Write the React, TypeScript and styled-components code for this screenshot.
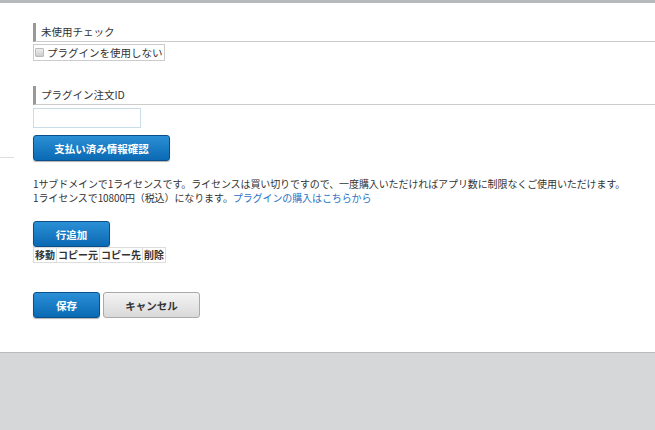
import React from "react";
import styled, { createGlobalStyle } from "styled-components";

const G = createGlobalStyle`
  html,body{margin:0;padding:0;background:#d6d7d9;}
  body{font-family:"Noto Sans CJK JP","Liberation Sans",sans-serif;font-size:11px;color:#333;line-height:1.2;}
`;
const Page = styled.div`
  background:#fff;height:353px;border-top:3px solid #b8b9bb;box-sizing:border-box;
  border-bottom:1px solid #bbb;position:relative;padding:20px 0 0 33px;
`;
const SideLine = styled.div`position:absolute;left:0;top:154px;width:14px;border-top:1px solid #ddd;`;
const Heading = styled.div`
  border-left:3px solid #999;border-bottom:1px solid #ccc;padding:0 0 0 5px;
  height:18px;line-height:17px;font-size:10.5px;color:#333;
`;
const CheckLabel = styled.label`
  display:inline-flex;align-items:center;gap:3px;border:1px solid #ccc;height:15px;line-height:15px;
  padding:0 1px 0 1px;font-size:10.5px;margin-top:2px;vertical-align:top;
`;
const Box = styled.span`width:7px;height:7px;border:1px solid #bbb;background:linear-gradient(#eee,#ccc);border-radius:1px;`;
const Input = styled.input`
  display:block;width:108px;height:20px;box-sizing:border-box;border:1px solid #c8dde8;
  margin-top:3px;outline:none;
`;
const Btn = styled.button<{ $w: number; $gray?: boolean }>`
  display:inline-flex;align-items:center;justify-content:center;width:${p => p.$w}px;height:26px;
  border-radius:3px;font:bold 10.5px "Noto Sans CJK JP",sans-serif;cursor:pointer;padding:0;
  ${p => p.$gray
    ? "background:linear-gradient(#f4f4f4,#d9d9d9);border:1px solid #aaa;color:#333;"
    : "background:linear-gradient(#2b8fd6,#0a6ab3);border:1px solid #0a4f8a;color:#fff;box-shadow:0 1px 1px rgba(0,0,0,.3);"}
`;
const Text = styled.p`margin:16px 0 0;line-height:14px;font-size:10px;letter-spacing:-0.1px;white-space:nowrap;`;
const Link = styled.a`color:#2a73c4;text-decoration:none;`;
const Cells = styled.div`display:flex;`;
const Cell = styled.span`border:1px solid #ddd;height:14px;line-height:14px;font-size:10px;font-weight:bold;padding:0 1px;margin-right:-1px;`;
const Row = styled.div`display:flex;gap:3px;`;
const Gap = styled.div<{ $h: number }>`height:${p => p.$h}px;`;

export default function App() {
  return (
    <>
      <G />
      <Page>
        <SideLine />
        <Heading>未使用チェック</Heading>
        <CheckLabel><Box />プラグインを使用しない</CheckLabel>
        <Gap $h={25} />
        <Heading>プラグイン注文ID</Heading>
        <Input />
        <Gap $h={7} />
        <Btn $w={137}>支払い済み情報確認</Btn>
        <Text>1サブドメインで1ライセンスです。ライセンスは買い切りですので、一度購入いただければアプリ数に制限なくご使用いただけます。<br />1ライセンスで10800円（税込）になります。<Link href="#">プラグインの購入はこちらから</Link></Text>
        <Gap $h={16} />
        <Btn $w={77}>行追加</Btn>
        <Cells><Cell>移動</Cell><Cell>コピー元</Cell><Cell>コピー先</Cell><Cell>削除</Cell></Cells>
        <Gap $h={29} />
        <Row><Btn $w={67}>保存</Btn><Btn $w={97} $gray>キャンセル</Btn></Row>
      </Page>
    </>
  );
}
